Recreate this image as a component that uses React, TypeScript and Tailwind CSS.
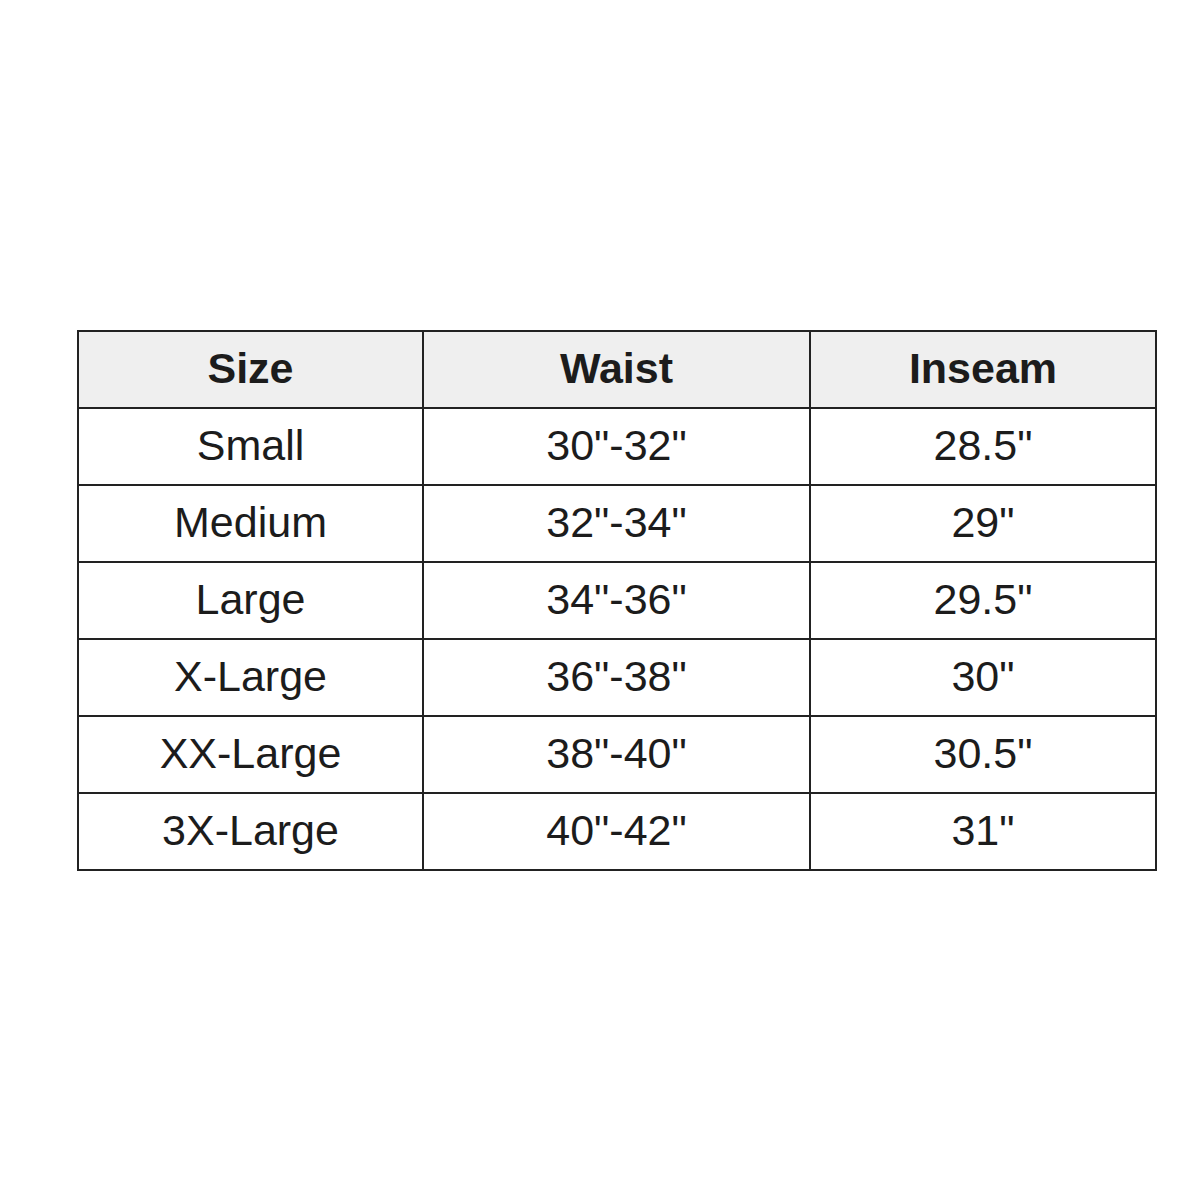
const rows: [string, string, string][] = [
  ["Small", "30\"-32\"", "28.5\""],
  ["Medium", "32\"-34\"", "29\""],
  ["Large", "34\"-36\"", "29.5\""],
  ["X-Large", "36\"-38\"", "30\""],
  ["XX-Large", "38\"-40\"", "30.5\""],
  ["3X-Large", "40\"-42\"", "31\""],
];

export default function App() {
  return (
    <div className="min-h-[1200px] w-[1200px] bg-white pl-[77px] pt-[330px] font-['Liberation_Sans',Arial,sans-serif] text-[#1c1c1c]">
      <table className="w-[1078px] table-fixed border-collapse text-center text-[43px] leading-none">
        <colgroup>
          <col className="w-[345px]" />
          <col className="w-[387px]" />
          <col className="w-[346px]" />
        </colgroup>
        <thead>
          <tr className="h-[77px] bg-[#efefef]">
            {["Size", "Waist", "Inseam"].map((h) => (
              <th key={h} className="border-2 border-[#222] pb-[2px] font-bold">
                {h}
              </th>
            ))}
          </tr>
        </thead>
        <tbody>
          {rows.map((r) => (
            <tr key={r[0]} className="h-[77px]">
              {r.map((c, i) => (
                <td key={i} className="border-2 border-[#222] pb-[2px] font-normal">
                  {c}
                </td>
              ))}
            </tr>
          ))}
        </tbody>
      </table>
    </div>
  );
}
